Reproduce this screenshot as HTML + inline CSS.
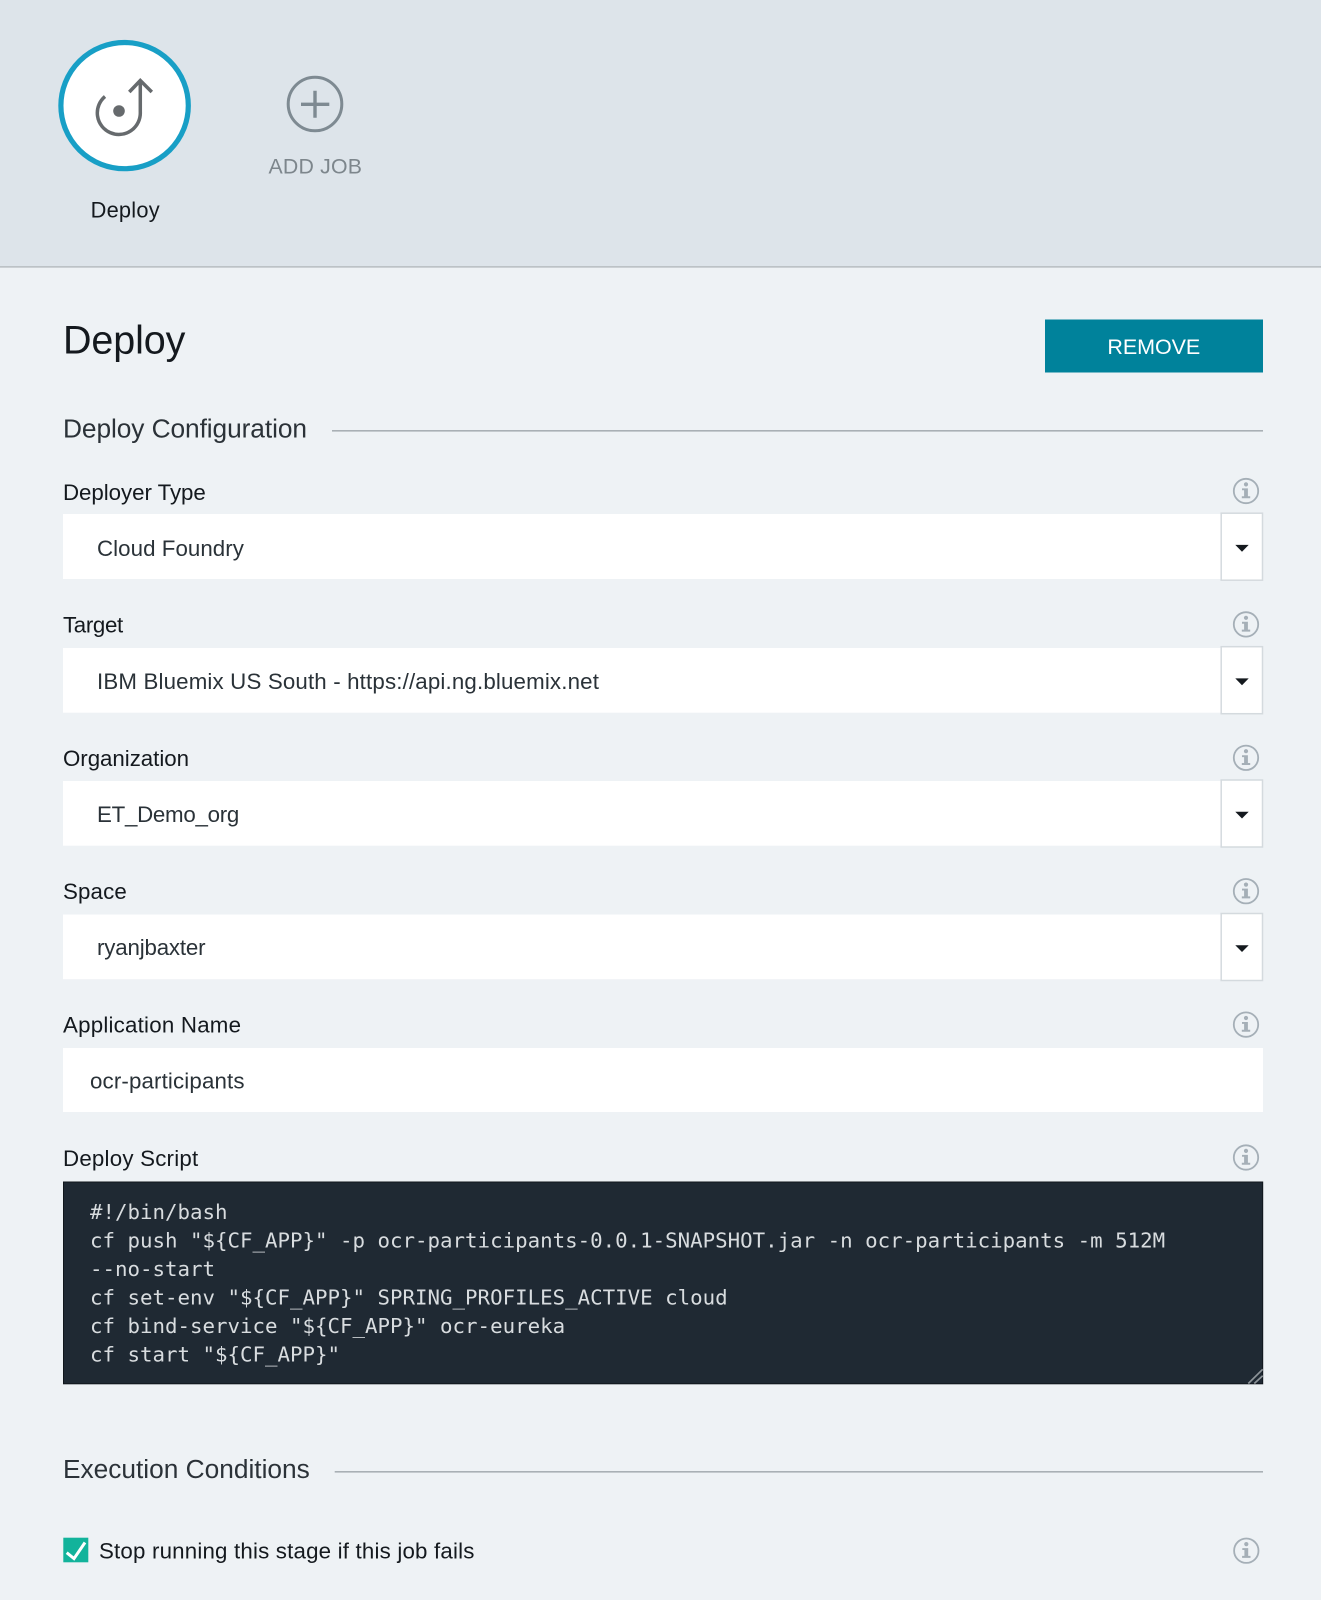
<!DOCTYPE html>
<html lang="en">
<head>
<meta charset="utf-8">
<title>Deploy</title>
<style>
html,body{margin:0;padding:0;width:1321px;height:1600px;overflow:hidden;background:#eef2f5}
svg{display:block}
text{font-family:"Liberation Sans",Arial,sans-serif;white-space:pre}
.lb{font-size:22.3px;fill:#14191e}
.val{font-size:22.3px;fill:#2a3238}
.sec{font-size:26.3px;fill:#2b3238}
.mono{font-family:"DejaVu Sans Mono","Liberation Mono",monospace;font-size:20.78px;fill:#d8dcdf}
</style>
</head>
<body>
<svg width="1321" height="1600" viewBox="0 0 1321 1600" xmlns="http://www.w3.org/2000/svg">
<defs>
<g id="info">
  <circle cx="0" cy="0" r="12.2" fill="none" stroke="#a5afb7" stroke-width="1.8"/>
  <circle cx="0" cy="-6.6" r="2.1" fill="#a5afb7"/>
  <path d="M-4 -2.6H1.9V5.2H4.2V7.2H-4.2V5.2H-1.9V-0.7H-4Z" fill="#a5afb7"/>
</g>
<g id="drop">
  <rect x="1221.2" y="0" width="41.3" height="67" fill="#fff" stroke="#d4dade" stroke-width="1.5"/>
  <path d="M1235.3 31.7H1248.7L1242 38.5Z" fill="#14191e"/>
</g>
</defs>

<rect width="1321" height="1600" fill="#eef2f5"/>
<rect width="1321" height="266" fill="#dde4ea"/>
<rect y="266" width="1321" height="1.7" fill="#bcc2c6"/>

<ellipse cx="124.6" cy="105.6" rx="63.7" ry="63.1" fill="#fff" stroke="#189fc6" stroke-width="5.2"/>
<path d="M105 96.5A21.5 21.5 0 1 0 140.3 112V81" fill="none" stroke="#666a6d" stroke-width="3.5"/>
<path d="M129.3 92L140.3 80.5L151.8 92" fill="none" stroke="#666a6d" stroke-width="3.5"/>
<circle cx="119" cy="111" r="5.8" fill="#666a6d"/>
<text x="90.6" y="217.6" font-size="21.8" fill="#14191e" textLength="69">Deploy</text>

<circle cx="315" cy="104" r="26.8" fill="none" stroke="#7e8a92" stroke-width="3"/>
<path d="M301 104.3H329.3M315 90.7V117.7" stroke="#7e8a92" stroke-width="3.4" fill="none"/>
<text x="268.5" y="173.4" font-size="21.3" fill="#7d868c" textLength="93.5">ADD JOB</text>

<text x="63" y="353.6" font-size="39.5" fill="#14191e" textLength="122.4">Deploy</text>
<rect x="1045" y="319.5" width="218" height="53" fill="#00829b"/>
<text x="1107.4" y="354" font-size="21.5" fill="#fff" textLength="92.8">REMOVE</text>

<text class="sec" x="63" y="437.5" textLength="244">Deploy Configuration</text>
<rect x="332" y="430" width="931" height="1.6" fill="#a9b0b5"/>

<text class="lb" x="63" y="500" textLength="142.8">Deployer Type</text>
<use href="#info" x="1246" y="491"/>
<rect x="63" y="514" width="1158" height="65" fill="#fff"/>
<use href="#drop" y="513.2"/>
<text class="val" x="97" y="556" textLength="146.9">Cloud Foundry</text>

<text class="lb" x="63" y="632.6" textLength="60.2">Target</text>
<use href="#info" x="1246" y="624.4"/>
<rect x="63" y="648" width="1158" height="64.7" fill="#fff"/>
<use href="#drop" y="646.7"/>
<text class="val" x="97" y="689.2" textLength="501.9">IBM Bluemix US South - https://api.ng.bluemix.net</text>

<text class="lb" x="63" y="765.9" textLength="126">Organization</text>
<use href="#info" x="1246" y="757.8"/>
<rect x="63" y="781" width="1158" height="64.7" fill="#fff"/>
<use href="#drop" y="780"/>
<text class="val" x="97" y="822" textLength="142.3">ET_Demo_org</text>

<text class="lb" x="63" y="899.2" textLength="63.8">Space</text>
<use href="#info" x="1246" y="891.2"/>
<rect x="63" y="914.5" width="1158" height="64.7" fill="#fff"/>
<use href="#drop" y="913.5"/>
<text class="val" x="97" y="955.2" textLength="108.6">ryanjbaxter</text>

<text class="lb" x="63" y="1032.6" textLength="178">Application Name</text>
<use href="#info" x="1246" y="1024.6"/>
<rect x="63" y="1048" width="1200" height="64" fill="#fff"/>
<text class="val" x="90" y="1088.6" textLength="154.5">ocr-participants</text>

<text class="lb" x="63" y="1166" textLength="135.2">Deploy Script</text>
<use href="#info" x="1246" y="1157.5"/>
<rect x="63.5" y="1182" width="1199.2" height="201.8" fill="#1f2933" stroke="#10161c" stroke-width="1"/>
<text class="mono" x="90" y="1219">#!/bin/bash</text>
<text class="mono" x="90" y="1247.5">cf push "${CF_APP}" -p ocr-participants-0.0.1-SNAPSHOT.jar -n ocr-participants -m 512M</text>
<text class="mono" x="90" y="1276">--no-start</text>
<text class="mono" x="90" y="1304.5">cf set-env "${CF_APP}" SPRING_PROFILES_ACTIVE cloud</text>
<text class="mono" x="90" y="1333">cf bind-service "${CF_APP}" ocr-eureka</text>
<text class="mono" x="90" y="1361.5">cf start "${CF_APP}"</text>
<path d="M1248.3 1383.5L1262.7 1369.3M1254.3 1383.5L1262.7 1375.7" stroke="#8d9499" stroke-width="1.7" fill="none"/>

<text class="sec" x="63" y="1478.2" textLength="246.8">Execution Conditions</text>
<rect x="334.7" y="1471" width="928.3" height="1.6" fill="#a9b0b5"/>

<rect x="63.3" y="1537.7" width="25" height="24.6" fill="#12b39b"/>
<path d="M66.7 1552.7L74 1558.6L85 1542.5" fill="none" stroke="#fff" stroke-width="3"/>
<text class="lb" x="99" y="1558.4" textLength="375.4">Stop running this stage if this job fails</text>
<use href="#info" x="1246.3" y="1550.7"/>
</svg>
</body>
</html>
